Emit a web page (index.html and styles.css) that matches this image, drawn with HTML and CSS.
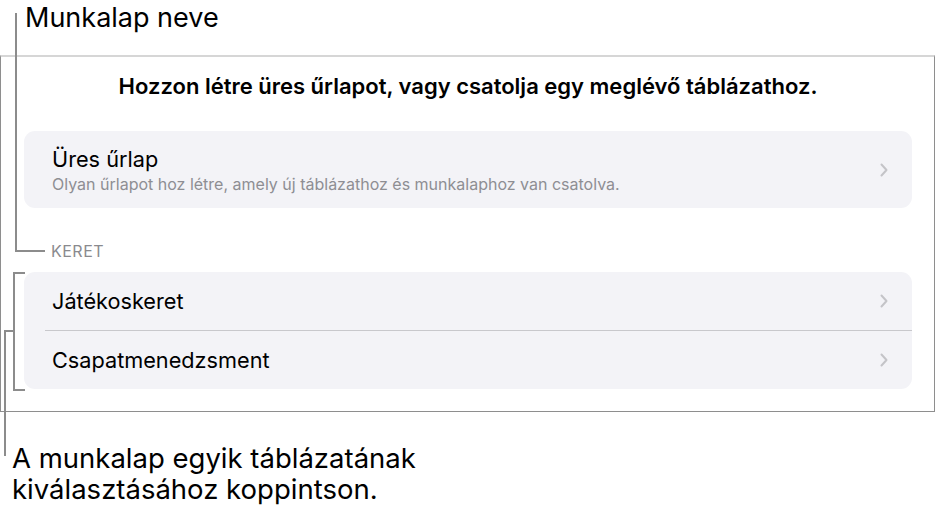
FILE: index.html
```html
<!DOCTYPE html>
<html lang="hu">
<head>
<meta charset="utf-8">
<title>Űrlap</title>
<link rel="stylesheet" href="styles.css">
</head>
<body>
<div class="page">
  <div class="callout-top">Munkalap neve</div>
  <div class="panel">
    <h1 class="title">Hozzon létre üres űrlapot, vagy csatolja egy meglévő táblázathoz.</h1>
    <div class="card">
      <div class="row row-tall">
        <div class="row-text">
          <div class="row-title">Üres űrlap</div>
          <div class="row-sub">Olyan űrlapot hoz létre, amely új táblázathoz és munkalaphoz van csatolva.</div>
        </div>
        <svg class="chev" width="8" height="14" viewBox="0 0 8 14"><path d="M1.5 1.5 L6.5 7 L1.5 12.5" fill="none" stroke="#c4c4c8" stroke-width="2" stroke-linecap="round" stroke-linejoin="round"/></svg>
      </div>
    </div>
    <div class="section-label">KERET</div>
    <div class="card">
      <div class="row">
        <div class="row-title">Játékoskeret</div>
        <svg class="chev" width="8" height="14" viewBox="0 0 8 14"><path d="M1.5 1.5 L6.5 7 L1.5 12.5" fill="none" stroke="#c4c4c8" stroke-width="2" stroke-linecap="round" stroke-linejoin="round"/></svg>
      </div>
      <div class="sep"></div>
      <div class="row">
        <div class="row-title">Csapatmenedzsment</div>
        <svg class="chev" width="8" height="14" viewBox="0 0 8 14"><path d="M1.5 1.5 L6.5 7 L1.5 12.5" fill="none" stroke="#c4c4c8" stroke-width="2" stroke-linecap="round" stroke-linejoin="round"/></svg>
      </div>
    </div>
  </div>
  <div class="callout-bottom">A munkalap egyik táblázatának<br>kiválasztásához koppintson.</div>

  <div class="line l1-v"></div>
  <div class="line l1-h"></div>
  <div class="line br-v"></div>
  <div class="line br-t"></div>
  <div class="line br-b"></div>
  <div class="line l2-h"></div>
  <div class="line l2-v"></div>
</div>
</body>
</html>
```

FILE: styles.css
```css
* { box-sizing: border-box; }
html, body { margin: 0; padding: 0; background: #fff; }
body { font-family: Inter, "Noto Sans", sans-serif; color: #000; }

.page {
  position: relative;
  width: 935px;
  height: 513px;
  overflow: hidden;
}

.callout-top {
  font-size: 27px;
  line-height: 31px;
  padding: 2px 0 0 25px;
  height: 55px;
}

.panel {
  width: 935px;
  height: 357px;
  border-top: 2px solid #d6d6d6;
  border-left: 1px solid #8e8e8e;
  border-right: 1px solid #8e8e8e;
  border-bottom: 1px solid #8e8e8e;
  padding: 16px 22px 0 23px;
}

.title {
  margin: 0 0 32px;
  font-size: 22px;
  line-height: 26px;
  font-weight: 600;
  text-align: center;
}

.card {
  background: #f3f3f7;
  border-radius: 11px;
}

.row {
  display: flex;
  align-items: center;
  justify-content: space-between;
  height: 58px;
  padding: 0 24px 0 28px;
}

.row-tall {
  height: 77px;
  padding-top: 0;
}

.row-text { display: flex; flex-direction: column; gap: 2px; }

.row-title {
  font-size: 21.7px;
  line-height: 26px;
}

.row-sub {
  font-size: 16px;
  line-height: 20px;
  color: #8e8e93;
}

.chev { display: block; flex: none; }

.sep {
  height: 1px;
  margin-left: 21px;
  background: #c8c8cc;
}

.section-label {
  margin: 33px 0 11px 27px;
  font-size: 16px;
  line-height: 20px;
  color: #8a8a8e;
  letter-spacing: 0.5px;
}

.callout-bottom {
  margin-top: 31px;
  padding-left: 12px;
  font-size: 27.5px;
  line-height: 31px;
}

.line { position: absolute; background: #8c8c8c; }
.l1-v { left: 15px; top: 13px; width: 2px; height: 239px; }
.l1-h { left: 15px; top: 250px; width: 30px; height: 2px; }
.br-v { left: 13px; top: 272px; width: 2px; height: 119px; }
.br-t { left: 13px; top: 272px; width: 12px; height: 2px; }
.br-b { left: 13px; top: 389px; width: 12px; height: 2px; }
.l2-h { left: 4px; top: 330px; width: 10px; height: 2px; }
.l2-v { left: 4px; top: 330px; width: 2px; height: 126px; }
```
